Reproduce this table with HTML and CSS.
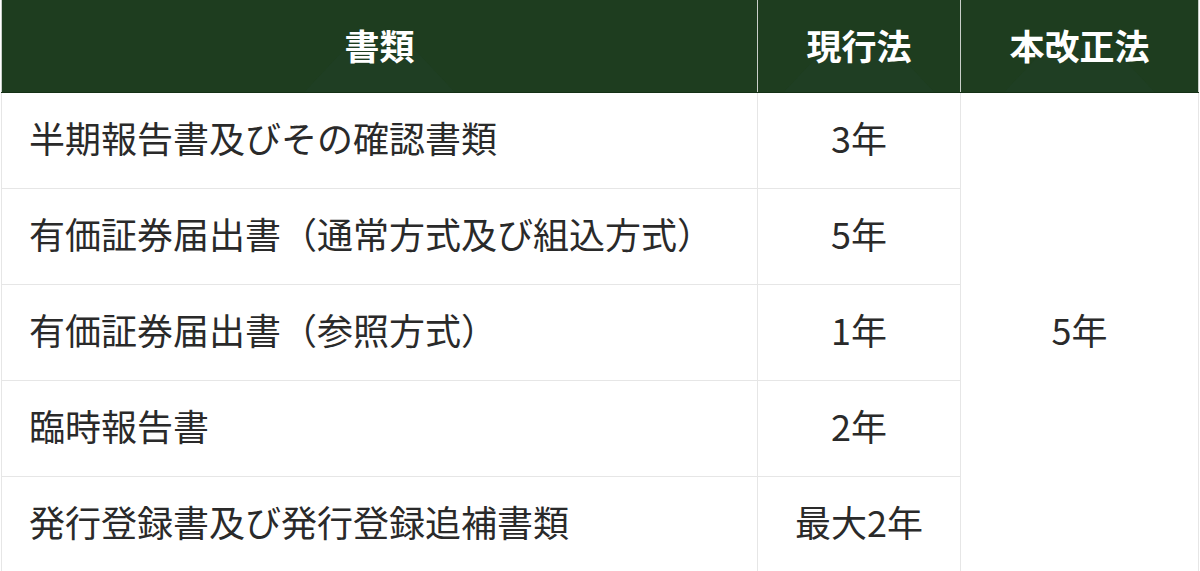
FILE: index.html
```html
<!DOCTYPE html>
<html lang="ja">
<head>
<meta charset="utf-8">
<link rel="stylesheet" href="styles.css">
</head>
<body>
<table class="doc-table">
  <colgroup>
    <col class="c1">
    <col class="c2">
    <col class="c3">
  </colgroup>
  <thead>
    <tr>
      <th><span class="th-label">書類</span></th>
      <th><span class="th-label">現行法</span></th>
      <th><span class="th-label">本改正法</span></th>
    </tr>
  </thead>
  <tbody>
    <tr>
      <td class="name"><span class="cell-text">半期報告書及びその確認書類</span></td>
      <td class="val"><span class="cell-text">3年</span></td>
      <td class="val merged" rowspan="5"><span class="cell-text">5年</span></td>
    </tr>
    <tr>
      <td class="name"><span class="cell-text">有価証券届出書（通常方式及び組込方式）</span></td>
      <td class="val"><span class="cell-text">5年</span></td>
    </tr>
    <tr>
      <td class="name"><span class="cell-text">有価証券届出書（参照方式）</span></td>
      <td class="val"><span class="cell-text">1年</span></td>
    </tr>
    <tr>
      <td class="name"><span class="cell-text">臨時報告書</span></td>
      <td class="val"><span class="cell-text">2年</span></td>
    </tr>
    <tr>
      <td class="name"><span class="cell-text">発行登録書及び発行登録追補書類</span></td>
      <td class="val"><span class="cell-text">最大2年</span></td>
    </tr>
  </tbody>
</table>
</body>
</html>
```
FILE: styles.css
```css
html, body {
  margin: 0;
  padding: 0;
  background: #ffffff;
}
body {
  padding-left: 1px;
  font-family: "Noto Sans CJK JP", "Noto Sans", sans-serif;
}
.doc-table {
  border-collapse: collapse;
  table-layout: fixed;
  width: 1197px;
}
.c1 { width: 756px; }
.c2 { width: 203px; }
.c3 { width: 238px; }

.doc-table th {
  position: relative;
  height: 92px;
  padding: 0;
  background: #1e3d1f;
  color: #ffffff;
  font-size: 35px;
  font-weight: 700;
  text-align: center;
  vertical-align: middle;
  border-left: 1px solid #c9cfc9;
  border-right: 1px solid #c9cfc9;
  border-bottom: 1px solid #143015;
  overflow: hidden;
  line-height: 1;
}
.doc-table th::after {
  content: "";
  position: absolute;
  left: 50%;
  bottom: 0;
  width: 150px;
  height: 48px;
  transform: translateX(-50%);
  background: #21422a;
  opacity: 0.4;
  clip-path: polygon(30% 0, 70% 0, 100% 100%, 0 100%);
}
.th-label {
  position: relative;
  z-index: 1;
  display: inline-block;
  transform: translateY(-2px);
}
.doc-table td {
  height: 95px;
  padding: 0;
  font-size: 36px;
  font-weight: 400;
  color: #2a2a2a;
  border: 1px solid #e6e6e6;
  vertical-align: middle;
  line-height: 1;
  text-spacing-trim: space-all;
}
.cell-text {
  display: inline-block;
  transform: translateY(-4px);
}
.doc-table td.name {
  padding-left: 27px;
  text-align: left;
}
.doc-table td.val {
  text-align: center;
}
```
